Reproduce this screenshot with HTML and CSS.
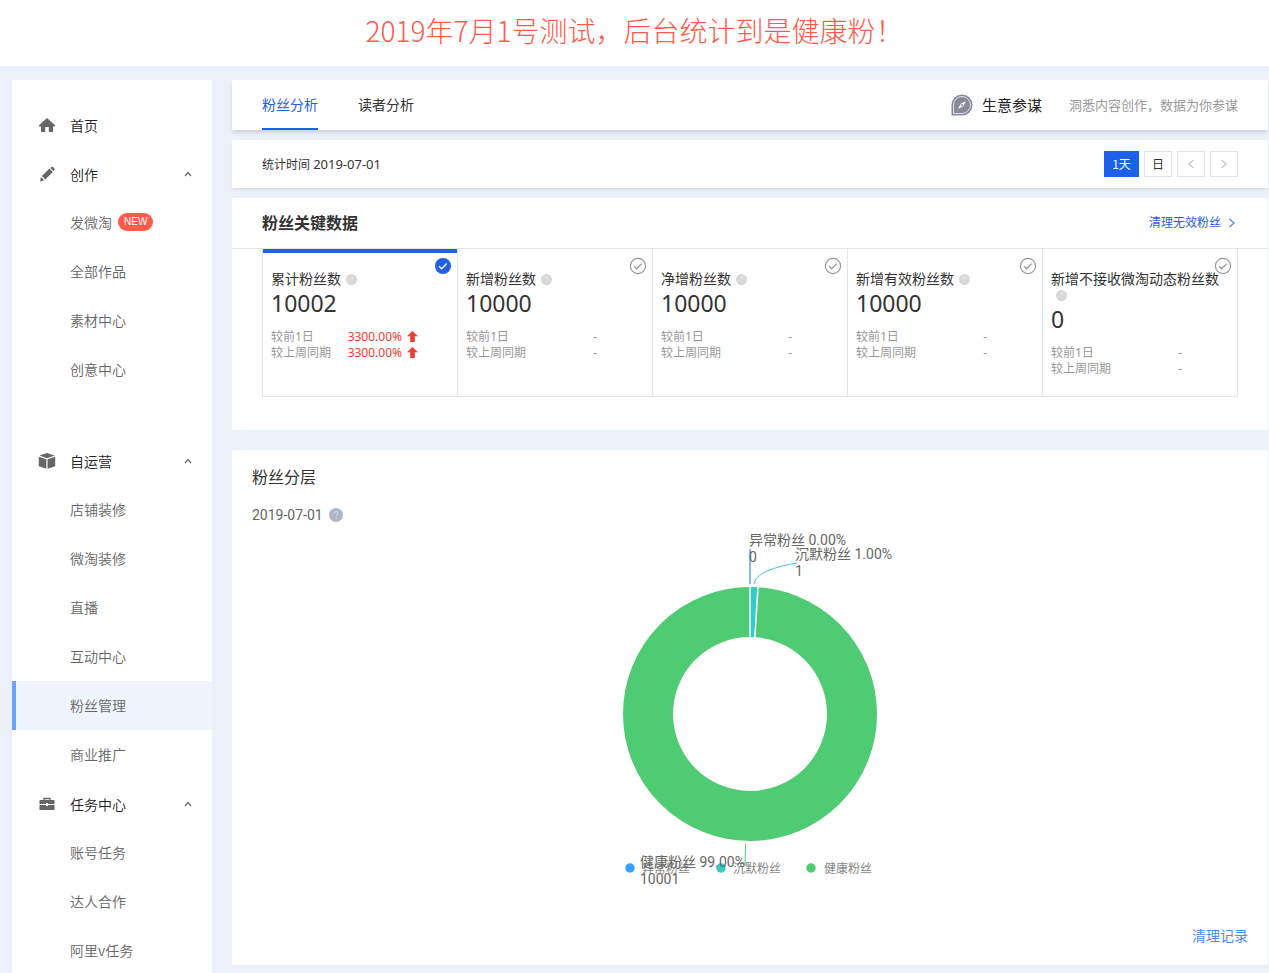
FILE: index.html
```html
<!DOCTYPE html>
<html lang="zh-CN">
<head>
<meta charset="utf-8">
<title>粉丝分析</title>
<link rel="stylesheet" href="styles.css">
</head>
<body>
<svg class="defs" width="0" height="0" aria-hidden="true">
  <symbol id="chevron-up" viewBox="0 0 8 6"><path d="M1 5 4 1.5 7 5" fill="none" stroke="#666" stroke-width="1.2"/></symbol>
  <symbol id="help" viewBox="0 0 11 11"><circle cx="5.5" cy="5.5" r="5.5" fill="#d8d8d8"/><path d="M4 4.4c0-2 3-2 3-.1 0 1-1.4 1.1-1.4 2.1M5.6 7.5v1" fill="none" stroke="#e9e9e9" stroke-width="1"/></symbol>
  <symbol id="check" viewBox="0 0 18 18"><circle cx="9" cy="9" r="7.6" fill="none" stroke="#999" stroke-width="1.2"/><path d="m5 9.2 2.7 2.6 5-5.2" fill="none" stroke="#999" stroke-width="1.3"/></symbol>
  <symbol id="check-on" viewBox="0 0 18 18"><circle cx="9" cy="9" r="8" fill="#1f60e8"/><path d="m5 9.2 2.7 2.6 5-5.2" fill="none" stroke="#fff" stroke-width="1.4"/></symbol>
  <symbol id="arrow-up" viewBox="0 0 11 11"><path d="M5.5 0 11 5.2H7.8V11H3.2V5.2H0z" fill="#f43c32"/></symbol>
</svg>
<header class="banner"><h1>2019年7月1号测试，后台统计到是健康粉！</h1></header>
<div class="layout">
  <nav class="sidebar">
    <a class="item group" href="#"><svg class="icon" viewBox="0 0 18 18"><path d="M9 2 17 9.2V10.5H15V16H10.8V11H7.2V16H3V10.5H1V9.2z" fill="#666"/></svg>首页</a>
    <a class="item group" href="#"><svg class="icon" viewBox="0 0 18 18"><path d="m2 16.5 1-4.4 3.3 3.2zM3.9 11l7.6-7.4 3.4 3.3-7.6 7.5zM12.5 2.9l1-.9c.5-.4 1-.4 1.5 0L16.400 3.5c.5.5.5 1 0 1.5l-.9 1z" fill="#666"/></svg>创作<svg class="chevron"><use href="#chevron-up"/></svg></a>
    <a class="item" href="#">发微淘<span class="badge">NEW</span></a>
    <a class="item" href="#">全部作品</a>
    <a class="item" href="#">素材中心</a>
    <a class="item" href="#">创意中心</a>
    <a class="item group spaced" href="#"><svg class="icon" viewBox="0 0 18 18"><path d="M9 1 16.500 3.600 9 6.200 1.500 3.600zM.8 4.700 8.400 7.300V16.800L.8 14.200zM17.200 4.700 9.600 7.300V16.800L17.200 14.200z" fill="#666"/></svg>自运营<svg class="chevron"><use href="#chevron-up"/></svg></a>
    <a class="item" href="#">店铺装修</a>
    <a class="item" href="#">微淘装修</a>
    <a class="item" href="#">直播</a>
    <a class="item" href="#">互动中心</a>
    <a class="item active" href="#" aria-current="page">粉丝管理</a>
    <a class="item" href="#">商业推广</a>
    <a class="item group" href="#"><svg class="icon" viewBox="0 0 18 18"><path d="M6 5V3.500H12V5" fill="none" stroke="#666" stroke-width="1.300"/><path d="M2.500 5h13c.6 0 1 .4 1 1v3H10V8H8v1H1.500V6c0-.6.4-1 1-1zM1.500 10H8v1h2v-1h6.500v5h-15z" fill="#666"/></svg>任务中心<svg class="chevron"><use href="#chevron-up"/></svg></a>
    <a class="item" href="#">账号任务</a>
    <a class="item" href="#">达人合作</a>
    <a class="item" href="#">阿里v任务</a>
  </nav>
  <main class="main">
    <section class="panel tabs">
      <a class="tab selected" href="#">粉丝分析</a>
      <a class="tab" href="#">读者分析</a>
      <div class="advisor">
        <svg class="compass" viewBox="0 0 22 22"><path d="M.5 21.500V11A10.500 10.500 0 1 1 11 21.500z" fill="#858b98"/><path d="M2.500 19.500V11A8.500 8.500 0 1 1 11 19.500z" fill="none" stroke="#dfe1e5" stroke-width="1"/><path d="m15 7-2.800 5.200L7 15l2.800-5.200z" fill="#fff"/><circle cx="11" cy="11" r="1" fill="#858b98"/></svg>
        <strong>生意参谋</strong><span>洞悉内容创作，数据为你参谋</span>
      </div>
    </section>
    <section class="panel period">
      <p>统计时间 <time>2019-07-01</time></p>
      <div class="range">
        <button class="on">1天</button>
        <button>日</button>
        <button aria-label="前一天"><svg viewBox="0 0 8 10"><path d="M6.500 1 2 5l4.500 4" fill="none" stroke="#ccc" stroke-width="1.500"/></svg></button>
        <button aria-label="后一天"><svg viewBox="0 0 8 10"><path d="M1.500 1 6 5 1.500 9" fill="none" stroke="#ccc" stroke-width="1.500"/></svg></button>
      </div>
    </section>
    <section class="panel key">
      <div class="key-head">
        <h2>粉丝关键数据</h2>
        <a href="#">清理无效粉丝<svg viewBox="0 0 8 10"><path d="M1.500 1 6 5 1.500 9" fill="none" stroke="#5b7df0" stroke-width="1.200"/></svg></a>
      </div>
      <div class="metrics">
        <article class="metric chosen">
          <svg class="tick"><use href="#check-on"/></svg>
          <h3>累计粉丝数<svg class="help"><use href="#help"/></svg></h3>
          <p class="number">10002</p>
          <dl>
            <dt>较前1日</dt><dd class="up">3300.00%</dd><dd><svg class="arrow"><use href="#arrow-up"/></svg></dd>
            <dt>较上周同期</dt><dd class="up">3300.00%</dd><dd><svg class="arrow"><use href="#arrow-up"/></svg></dd>
          </dl>
        </article>
        <article class="metric">
          <svg class="tick"><use href="#check"/></svg>
          <h3>新增粉丝数<svg class="help"><use href="#help"/></svg></h3>
          <p class="number">10000</p>
          <dl><dt>较前1日</dt><dd>-</dd><dd></dd><dt>较上周同期</dt><dd>-</dd><dd></dd></dl>
        </article>
        <article class="metric">
          <svg class="tick"><use href="#check"/></svg>
          <h3>净增粉丝数<svg class="help"><use href="#help"/></svg></h3>
          <p class="number">10000</p>
          <dl><dt>较前1日</dt><dd>-</dd><dd></dd><dt>较上周同期</dt><dd>-</dd><dd></dd></dl>
        </article>
        <article class="metric">
          <svg class="tick"><use href="#check"/></svg>
          <h3>新增有效粉丝数<svg class="help"><use href="#help"/></svg></h3>
          <p class="number">10000</p>
          <dl><dt>较前1日</dt><dd>-</dd><dd></dd><dt>较上周同期</dt><dd>-</dd><dd></dd></dl>
        </article>
        <article class="metric">
          <svg class="tick"><use href="#check"/></svg>
          <h3>新增不接收微淘动态粉丝数<svg class="help"><use href="#help"/></svg></h3>
          <p class="number">0</p>
          <dl><dt>较前1日</dt><dd>-</dd><dd></dd><dt>较上周同期</dt><dd>-</dd><dd></dd></dl>
        </article>
      </div>
    </section>
    <section class="panel layers">
      <h2>粉丝分层</h2>
      <p class="date">2019-07-01<svg viewBox="0 0 14 14"><circle cx="7" cy="7" r="7" fill="#adb6c9"/><path d="M5 5.500c0-2.600 4-2.500 4-.1C9 6.800 7.100 6.900 7.100 8.300M7.100 9.700v1.200" fill="none" stroke="#d3d9e4" stroke-width="1.200"/></svg></p>
      <svg class="donut" viewBox="0 0 400 370" role="img" aria-label="粉丝分层">
        <circle cx="200" cy="189" r="102" fill="none" stroke="#4ecb73" stroke-width="50"/>
        <path d="M200 62A127 127 0 0 1 208 62.300L204.800 112.200A77 77 0 0 0 200 112z" fill="#36cbcb"/>
        <path d="M200 61V113M208.100 61 204.800 113" stroke="#fff" stroke-width="1.500"/>
        <path d="M200 24V59" stroke="#7ebcff" stroke-width="2"/>
        <path d="M204 59C205 49 223 42 247 38" fill="none" stroke="#36cbcb"/>
        <path d="M195.500 319 195 341" stroke="#4ecb73"/>
        <g class="legend">
          <circle cx="80" cy="343" r="4.700" fill="#3aa0ff"/><text x="92" y="348">异常粉丝</text>
          <circle cx="171" cy="343" r="4.700" fill="#36cbcb"/><text x="183" y="348">沉默粉丝</text>
          <circle cx="261" cy="343" r="4.700" fill="#4ecb73"/><text x="274" y="348">健康粉丝</text>
        </g>
        <text x="199" y="20">异常粉丝 0.00%</text><text x="199" y="37">0</text>
        <text x="245" y="34">沉默粉丝 1.00%</text><text x="245" y="51">1</text>
        <text x="90" y="342">健康粉丝 99.00%</text><text x="90" y="359">10001</text>
      </svg>
      <a class="records" href="#">清理记录</a>
    </section>
  </main>
</div>
</body>
</html>
```
FILE: styles.css
```css
* { box-sizing: border-box; }
body {
  margin: 0;
  height: 100vh;
  overflow: hidden;
  display: flex;
  flex-direction: column;
  background: #ecf0f8;
  color: #333;
  font: 14px/20px "Noto Sans", "Noto Sans CJK SC", sans-serif;
}
h1, h2, h3, p, dl, dd { margin: 0; font-weight: 400; }
a { color: inherit; text-decoration: none; }
svg { flex: none; }
.defs { position: absolute; }
.banner { flex: none; height: 66px; background: #fff; text-align: center; }
.banner h1 { font: 300 28px/60px "Noto Sans CJK SC", sans-serif; color: #ff5a4a; }
.layout { flex: 1; min-height: 0; display: flex; gap: 20px; padding: 14px 1px 0 12px; }

.sidebar { flex: none; width: 200px; padding-top: 20px; background: #fff; overflow: hidden; }
.item { display: flex; align-items: center; height: 49px; padding: 0 20px 2px 58px; color: #666; font-family: "Noto Sans CJK SC", sans-serif; font-weight: 350; }
.group { padding-left: 26px; padding-bottom: 0; color: #222; }
.spaced { margin-top: 42px; }
.icon { width: 18px; height: 18px; margin-right: 14px; }
.chevron { width: 8px; height: 6px; margin-left: auto; }
.active { background: #eff5ff; border-left: 4px solid #66a6ff; padding-left: 54px; }
.badge {
  margin-left: 6px;
  padding: 0 6px;
  border-radius: 9px;
  background: #ff5a4a;
  color: #fff;
  font: 10px/18px "Liberation Sans", sans-serif;
}

.main { flex: 1; min-width: 0; display: flex; flex-direction: column; }
.panel { background: #fff; }
.tabs { display: flex; gap: 40px; height: 50px; padding: 0 30px; box-shadow: 0 3px 4px -1px #c6cad2; }
.tab { line-height: 50px; }
.selected { color: #1f60e8; border-bottom: 2px solid #1f60e8; }
.advisor { display: flex; align-items: center; margin-left: auto; color: #999; font-size: 13px; }
.compass { width: 22px; height: 22px; margin-right: 9px; }
.advisor strong { margin-right: 27px; font-size: 15px; font-weight: 400; color: #222; }

.period {
  display: flex;
  align-items: center;
  justify-content: space-between;
  height: 48px;
  margin-top: 10px;
  padding: 0 30px;
  font-size: 12px;
  box-shadow: 0 2px 3px -1px #ccd2da;
}
.period time { font-size: 13px; }
.range { display: flex; gap: 5px; }
.range button {
  display: flex;
  align-items: center;
  justify-content: center;
  width: 28px;
  height: 26px;
  padding: 0;
  border: 1px solid #e4e4e4;
  background: #fff;
  color: #333;
  font: 12px/24px "Noto Sans CJK SC", sans-serif;
}
.range .on { width: 35px; border-color: #1f60e8; background: #1f60e8; color: #fff; }
.range svg { width: 8px; height: 10px; }

.key { margin-top: 10px; padding-bottom: 33px; }
.key-head {
  display: flex;
  align-items: center;
  justify-content: space-between;
  height: 51px;
  padding: 0 30px;
  border-bottom: 1px solid #e4e7ea;
}
.key-head h2 { font-size: 16px; font-weight: 700; }
.key-head a { display: flex; align-items: center; font-size: 12px; color: #1f60e8; }
.key-head svg { width: 8px; height: 10px; margin: 0 2px 0 7px; }
.metrics { display: grid; grid-template-columns: repeat(5, 1fr); margin: 0 30px; border: solid #dfe6ec; border-width: 0 1px 1px 0; }
.metric { position: relative; min-height: 147px; padding: 22px 8px 16px; border-left: 1px solid #dfe6ec; }
.chosen::before { content: ""; display: block; height: 4px; margin: -22px -8px 18px; background: #1f60e8; }
.tick { position: absolute; top: 8px; right: 5px; width: 18px; height: 18px; }
.metric h3 { font-size: 14px; line-height: 16px; }
.help { width: 11px; height: 11px; margin-left: 5px; vertical-align: -1px; }
.number { font-size: 23px; line-height: 32px; margin-bottom: 10px; }
.metric dl { display: grid; grid-template-columns: 70px 61px 16px; font-size: 12px; line-height: 16px; color: #999; }
.metric dd { text-align: right; }
.metric .up { color: #f43c32; }
.arrow { width: 11px; height: 11px; vertical-align: -1px; }

.layers { display: flex; flex-direction: column; margin-top: 20px; padding: 15px 20px 19px; border-radius: 3px; }
.layers h2 { font-size: 16px; line-height: 24px; }
.date { display: flex; align-items: center; gap: 6px; margin-top: 16px; font-family: Roboto, sans-serif; color: #666; }
.date svg { width: 14px; height: 14px; }
.donut { align-self: center; width: 400px; height: 370px; font: 14px Roboto, "Noto Sans CJK SC", sans-serif; fill: #666; }
.legend { font-size: 12px; fill: #888; }
.records { align-self: flex-end; margin-top: 31px; color: #4a8af8; }
```
